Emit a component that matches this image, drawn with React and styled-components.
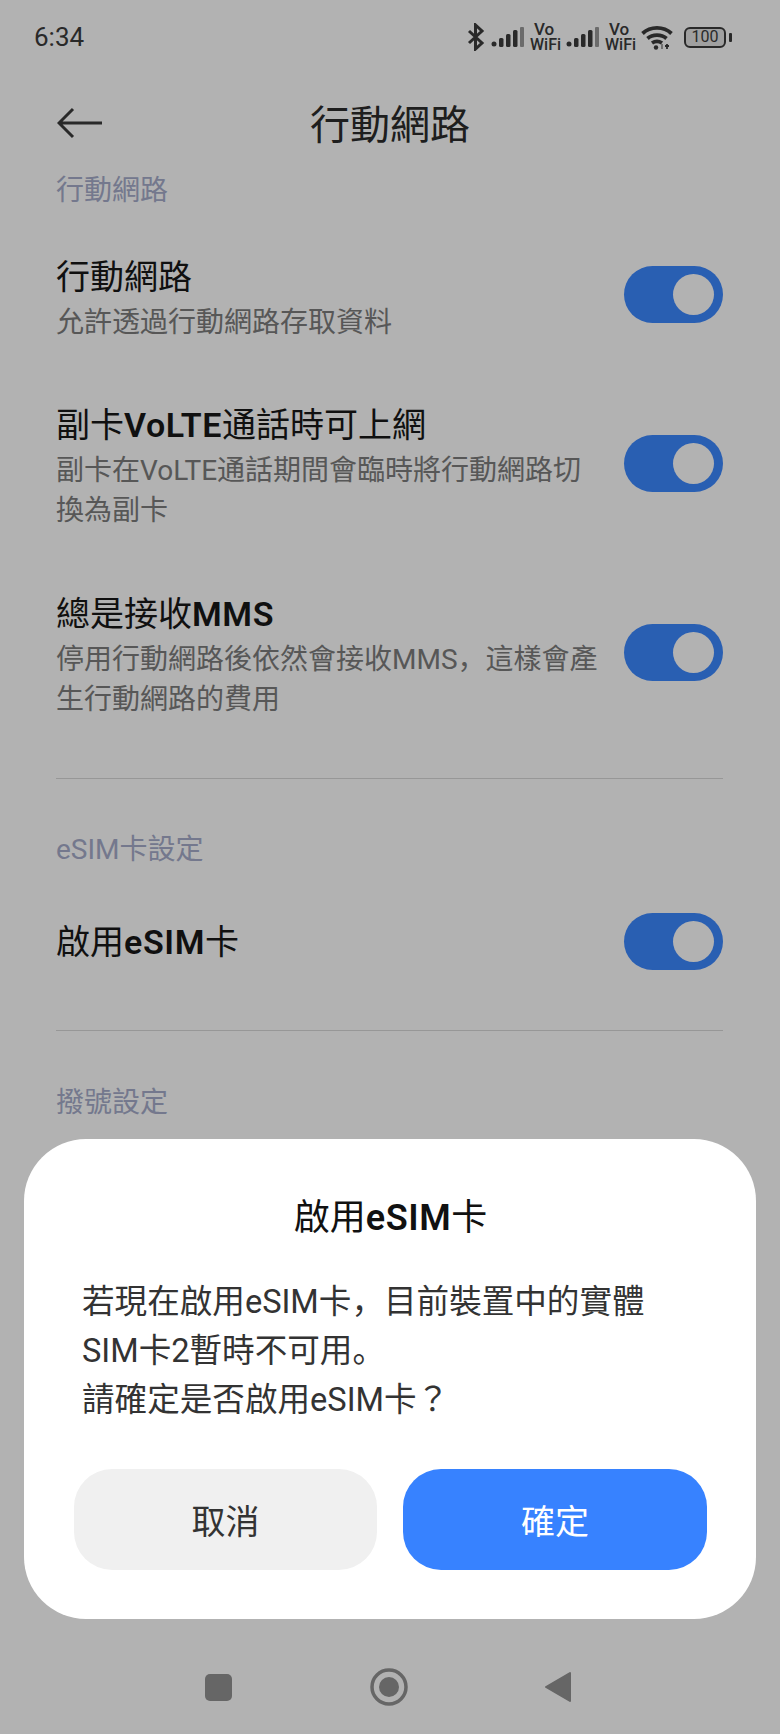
import React from "react";
import styled, { createGlobalStyle } from "styled-components";

const COMMA = "\uFF0C";
const QUESTION = "\uFF1F";

const Global = createGlobalStyle`
  html, body { margin: 0; padding: 0; background: #fff; }
  * { box-sizing: border-box; }
  body { font-family: Roboto, "Noto Sans CJK SC", "Noto Sans CJK TC", sans-serif; }
`;

const Page = styled.div`
  position: relative;
  width: 780px;
  height: 1734px;
  overflow: hidden;
  background: #fff;
  display: flex;
  flex-direction: column;
`;
const StatusBar = styled.div`
  height: 74px;
  flex: none;
  padding: 0 54px 0 34px;
  display: flex;
  align-items: center;
  justify-content: space-between;
  color: #3c3c3c;
`;
const Time = styled.span`
  font-size: 26px;
  line-height: 1;
`;
const StatusIcons = styled.div`
  display: flex;
  align-items: center;
  gap: 6px;
`;
const VoWifi = styled.span`
  display: flex;
  flex-direction: column;
  width: 30px;
  font-size: 16px;
  line-height: 15px;
  font-weight: 500;
  white-space: nowrap;
`;
const Vo = styled.span`
  padding-left: 4px;
  font-size: 17px;
`;
const Battery = styled.span`
  width: 42px;
  height: 21px;
  margin-left: 5px;
  border: 2px solid #3c3c3c;
  border-radius: 6px;
  position: relative;
  display: flex;
  align-items: center;
  justify-content: center;
  font-size: 16px;
  line-height: 1;
  background: rgba(0, 0, 0, 0.1);
  &::after {
    content: "";
    position: absolute;
    right: -8px;
    top: 4px;
    width: 3px;
    height: 9px;
    border-radius: 1px;
    background: #3c3c3c;
  }
`;
const Header = styled.header`
  height: 97px;
  flex: none;
  position: relative;
  display: flex;
  align-items: flex-start;
  justify-content: center;
`;
const BackButton = styled.span`
  position: absolute;
  left: 57px;
  top: 33px;
  display: flex;
`;
const Title = styled.h1`
  margin: 0;
  font-size: 40px;
  line-height: 104px;
  font-weight: 400;
  color: #2c2c2c;
`;
const Content = styled.main`
  flex: 1;
  padding: 0 57px 0 56px;
`;
const SectionLabel = styled.div`
  font-size: 28px;
  line-height: 40px;
  color: #a6adcb;
  margin-top: ${(p) => p.$top}px;
`;
const Row = styled.div`
  display: flex;
  align-items: center;
  justify-content: space-between;
  margin-top: ${(p) => p.$top}px;
`;
const RowText = styled.div`
  width: 546px;
`;
const RowTitle = styled.div`
  font-size: 34px;
  line-height: 48px;
  color: #181818;
`;
const Latin = styled.span`
  font-weight: 600;
  letter-spacing: 0.6px;
`;
const RowSub = styled.div`
  margin-top: 2px;
  font-size: 28px;
  line-height: 40px;
  color: #7d7d7d;
`;
const Toggle = styled.span`
  flex: none;
  width: 99px;
  height: 57px;
  margin-bottom: ${(p) => p.$lift}px;
  border-radius: 29px;
  background: #3c88ff;
  display: flex;
  align-items: center;
  justify-content: flex-end;
  padding-right: 9px;
  &::after {
    content: "";
    width: 41px;
    height: 41px;
    border-radius: 50%;
    background: #fff;
  }
`;
const Divider = styled.hr`
  border: 0;
  height: 1px;
  margin: ${(p) => p.$top}px 0 0;
  background: #d8d8d8;
`;
const NavBar = styled.nav`
  height: 94px;
  flex: none;
  padding: 0 209px 0 205px;
  display: flex;
  align-items: center;
  justify-content: space-between;
`;
const Scrim = styled.div`
  position: absolute;
  inset: 0;
  background: rgba(0, 0, 0, 0.3);
`;
const Dialog = styled.section`
  position: absolute;
  left: 24px;
  top: 1139px;
  width: 732px;
  height: 480px;
  border-radius: 62px;
  background: #fff;
  padding: 0 49px 0 50px;
  display: flex;
  flex-direction: column;
`;
const DialogTitle = styled.h2`
  margin: 54px 0 0;
  font-size: 36px;
  line-height: 50px;
  font-weight: 400;
  text-align: center;
  color: #111;
`;
const DialogBody = styled.p`
  margin: 35px 0 0;
  padding: 0 8px;
  font-size: 32.6px;
  line-height: 49px;
  color: #333;
`;
const CenteredMark = styled.span`
  font-family: "Noto Sans CJK TC", sans-serif;
  line-height: 0;
`;
const Actions = styled.div`
  margin-top: 44px;
  display: grid;
  grid-template-columns: 303px 304px;
  gap: 26px;
`;
const Btn = styled.button`
  height: 101px;
  border: 0;
  border-radius: 38px;
  font: inherit;
  font-size: 34px;
  background: ${(p) => (p.$primary ? "#3782ff" : "#f0f0f0")};
  color: ${(p) => (p.$primary ? "#fff" : "#333")};
`;

const Bluetooth = () => (
  <svg width="18" height="28" viewBox="0 0 18 28" fill="none" stroke="#3c3c3c" strokeWidth="3">
    <path d="M2 8l13 12-6.500 6V2L15 8 2 20" />
  </svg>
);
const Signal = () => (
  <svg width="33" height="20" viewBox="0 0 33 20">
    <circle cx="3" cy="17" r="2.500" fill="#3c3c3c" />
    <rect x="8" y="11" width="4.500" height="9" rx="1.500" fill="#3c3c3c" />
    <rect x="15" y="7" width="4.500" height="13" rx="1.500" fill="#3c3c3c" />
    <rect x="22" y="3" width="4.500" height="17" rx="1.500" fill="#3c3c3c" />
    <rect x="29" y="0" width="4" height="20" rx="1" fill="#9a9a9a" />
  </svg>
);
const Wifi = () => (
  <svg width="32" height="25" viewBox="0 0 32 25" fill="none" stroke="#3c3c3c" strokeWidth="3.800">
    <path d="M1.500 8.500C9.500 1 22.500 1 30.500 8.500" />
    <path d="M6.500 13.500C11.500 9 20.500 9 25.500 13.500" />
    <path d="M11 18C14 16 18 16 21 18" />
    <circle cx="15" cy="22.500" r="2.200" fill="#3c3c3c" stroke="none" />
    <path d="M21 24v-5" stroke="#9a9a9a" strokeWidth="1.800" />
    <path d="M26 24v-5M24 21h4" stroke="#3c3c3c" strokeWidth="1.800" />
  </svg>
);
const BackArrow = () => (
  <svg width="46" height="34" viewBox="0 0 46 34" fill="none" stroke="#3c3c3c" strokeWidth="3">
    <path d="M45 16H2M16 2L2 16l14 14" />
  </svg>
);
const NavSquare = () => (
  <svg width="27" height="27" viewBox="0 0 27 27"><rect width="27" height="27" rx="5" fill="#929292" /></svg>
);
const NavHome = () => (
  <svg width="38" height="38" viewBox="0 0 38 38">
    <circle cx="19" cy="19" r="17" fill="none" stroke="#929292" strokeWidth="3.500" />
    <circle cx="19" cy="19" r="10" fill="#929292" />
  </svg>
);
const NavBack = () => (
  <svg width="26" height="32" viewBox="0 0 26 32">
    <path d="M25 2v28L1 16z" fill="#929292" stroke="#929292" strokeWidth="2" strokeLinejoin="round" />
  </svg>
);
const VoWifiMark = () => (
  <VoWifi>
    <Vo>Vo</Vo>
    <span>WiFi</span>
  </VoWifi>
);

export default function App() {
  return (
    <Page>
      <Global />
      <StatusBar>
        <Time>6:34</Time>
        <StatusIcons>
          <Bluetooth />
          <Signal />
          <VoWifiMark />
          <Signal />
          <VoWifiMark />
          <Wifi />
          <Battery>100</Battery>
        </StatusIcons>
      </StatusBar>
      <Header>
        <BackButton><BackArrow /></BackButton>
        <Title>行動網路</Title>
      </Header>
      <Content>
        <SectionLabel $top={0}>行動網路</SectionLabel>
        <Row $top={42}>
          <RowText>
            <RowTitle>行動網路</RowTitle>
            <RowSub>允許透過行動網路存取資料</RowSub>
          </RowText>
          <Toggle $lift={8} />
        </Row>
        <Row $top={58}>
          <RowText>
            <RowTitle>副卡<Latin>VoLTE</Latin>通話時可上網</RowTitle>
            <RowSub>副卡在VoLTE通話期間會臨時將行動網路切換為副卡</RowSub>
          </RowText>
          <Toggle $lift={6} />
        </Row>
        <Row $top={59}>
          <RowText>
            <RowTitle>總是接收<Latin>MMS</Latin></RowTitle>
            <RowSub>{`停用行動網路後依然會接收MMS${COMMA}這樣會產生行動網路的費用`}</RowSub>
          </RowText>
          <Toggle $lift={6} />
        </Row>
        <Divider $top={58} />
        <SectionLabel $top={51}>eSIM卡設定</SectionLabel>
        <Row $top={43}>
          <RowText>
            <RowTitle>啟用<Latin>eSIM</Latin>卡</RowTitle>
          </RowText>
          <Toggle $lift={1} />
        </Row>
        <Divider $top={59} />
        <SectionLabel $top={52}>撥號設定</SectionLabel>
      </Content>
      <NavBar>
        <NavSquare />
        <NavHome />
        <NavBack />
      </NavBar>
      <Scrim />
      <Dialog>
        <DialogTitle>啟用<Latin>eSIM</Latin>卡</DialogTitle>
        <DialogBody>
          {`若現在啟用eSIM卡${COMMA}目前裝置中的實體`}
          <br />
          SIM卡2暫時不可用。
          <br />
          請確定是否啟用eSIM卡<CenteredMark>{QUESTION}</CenteredMark>
        </DialogBody>
        <Actions>
          <Btn>取消</Btn>
          <Btn $primary>確定</Btn>
        </Actions>
      </Dialog>
    </Page>
  );
}
